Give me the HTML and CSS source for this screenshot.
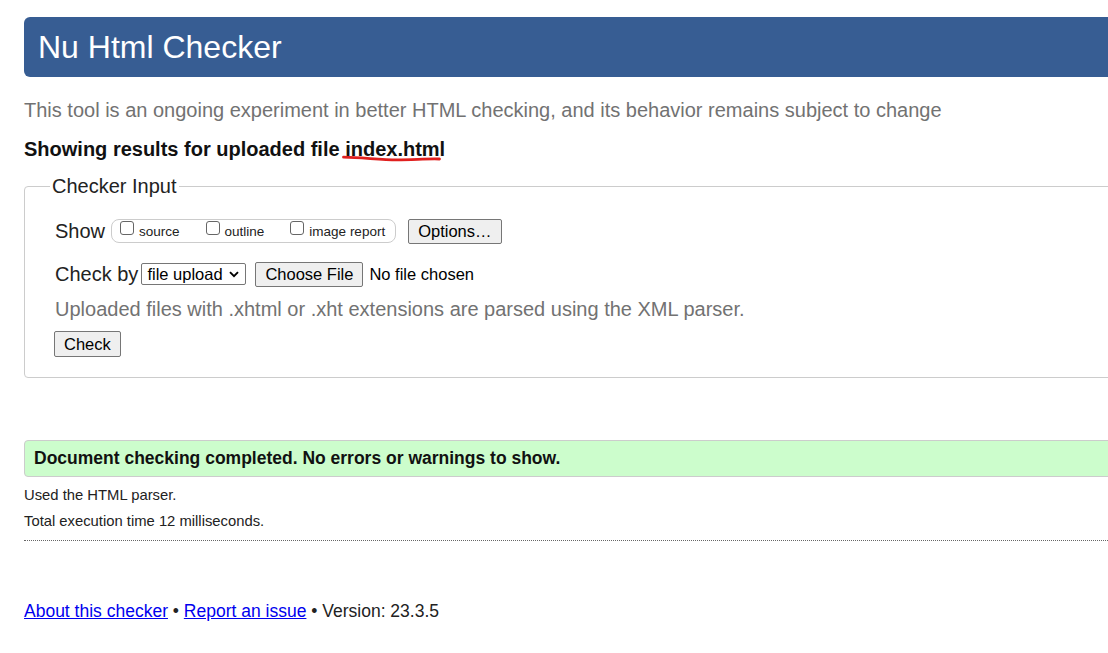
FILE: index.html
```html
<!DOCTYPE html>
<html lang="en">
<head>
<meta charset="utf-8">
<title>Nu Html Checker</title>
<link rel="stylesheet" href="styles.css">
</head>
<body>
<div class="page">
  <h1 class="title">Nu Html Checker</h1>
  <p class="intro">This tool is an ongoing experiment in better HTML checking, and its behavior remains subject to change</p>
  <p class="results">Showing results for uploaded file <span class="fname">index.html<svg class="scribble" viewBox="0 0 100 7" width="100" height="7"><path d="M1.5 2.2 C 20 2.4, 38 4.8, 55 4.8 S 84 3.6, 97.5 4" fill="none" stroke="#e0201f" stroke-width="2.8" stroke-linecap="round"/></svg></span></p>
  <fieldset class="input-box">
    <legend class="legend">Checker Input</legend>
    <div class="content">
      <div class="row">
        <span class="label">Show</span>
        <span class="pill">
          <span class="opt"><span class="cb"></span><span class="opt-text">source</span></span>
          <span class="opt"><span class="cb"></span><span class="opt-text">outline</span></span>
          <span class="opt"><span class="cb"></span><span class="opt-text">image report</span></span>
        </span>
        <button class="btn btn-options" type="button">Options…</button>
      </div>
      <div class="row row-by">
        <span class="label">Check by</span>
        <span class="select"><span class="select-text">file upload</span><svg class="chev" viewBox="0 0 10 7" width="10" height="7"><path d="M1 1.2 L5 5.2 L9 1.2" fill="none" stroke="#000" stroke-width="1.9"/></svg></span>
        <button class="btn btn-file" type="button">Choose File</button>
        <span class="nofile">No file chosen</span>
      </div>
      <p class="hint">Uploaded files with .xhtml or .xht extensions are parsed using the XML parser.</p>
      <div class="row row-submit">
        <button class="btn btn-check" type="button">Check</button>
      </div>
    </div>
  </fieldset>
  <p class="success">Document checking completed. No errors or warnings to show.</p>
  <p class="meta meta-first">Used the HTML parser.</p>
  <p class="meta">Total execution time 12 milliseconds.</p>
  <hr class="sep">
  <p class="footer"><a class="link" href="#about">About this checker</a> • <a class="link" href="#report">Report an issue</a> • Version: 23.3.5</p>
</div>
</body>
</html>
```
FILE: styles.css
```css
html {
  overflow: hidden;
}

body {
  margin: 0;
  background: #fff;
  font-family: "Liberation Sans", Arial, sans-serif;
  color: #222;
}

.page {
  width: 1160px;
  padding: 17px 0 0 24px;
}

.title {
  margin: 0;
  height: 60px;
  line-height: 60px;
  padding-left: 14px;
  background: #375d93;
  color: #fff;
  font-size: 32px;
  font-weight: normal;
  border-radius: 6px;
}

.intro {
  margin: 22px 0 0;
  font-size: 20px;
  line-height: 23px;
  color: #727272;
}

.results {
  margin: 16px 0 0;
  font-size: 20px;
  line-height: 23px;
  font-weight: bold;
  color: #111;
}

.fname {
  position: relative;
}

.scribble {
  position: absolute;
  left: -3px;
  top: 17px;
}

.input-box {
  margin: 14px 0 0;
  padding: 20px 0 20px 25px;
  border: 1px solid #ccc;
  border-radius: 4px;
  min-width: 0;
}

.legend {
  padding: 0 2px;
  font-size: 20px;
  line-height: 23px;
  color: #222;
}

.content {
  padding-left: 5px;
}

.row {
  display: flex;
  align-items: center;
  height: 26px;
}

.label {
  font-size: 20px;
  line-height: 23px;
  color: #222;
}

.pill {
  display: flex;
  align-items: flex-start;
  box-sizing: border-box;
  height: 24px;
  margin-left: 6px;
  padding: 0 10px 0 8px;
  border: 1px solid #ccc;
  border-radius: 8px;
}

.opt {
  display: flex;
  align-items: flex-start;
}

.opt + .opt {
  margin-left: 26px;
}

.cb {
  box-sizing: border-box;
  width: 14px;
  height: 14px;
  margin: 1px 5px 0 0;
  border: 1px solid #666;
  border-radius: 3px;
  background: #fff;
}

.opt-text {
  padding-top: 4px;
  font-size: 13.5px;
  line-height: 16px;
  color: #222;
}

.btn {
  box-sizing: border-box;
  height: 25px;
  padding: 0 9px;
  border: 1px solid #767676;
  border-radius: 2px;
  background: #efefef;
  font-family: inherit;
  font-size: 16.5px;
  line-height: 23px;
  color: #000;
}

.btn-options {
  margin-left: 12px;
}

.row-by {
  margin-top: 17px;
}

.select {
  display: flex;
  align-items: center;
  justify-content: space-between;
  box-sizing: border-box;
  width: 105px;
  height: 22px;
  margin-left: 3px;
  padding: 0 6px 0 5px;
  border: 1px solid #767676;
  border-radius: 2px;
  background: #fff;
}

.select-text {
  font-size: 16.5px;
  line-height: 20px;
  color: #000;
}

.chev {
  display: block;
  margin-top: 1px;
}

.btn-file {
  margin-left: 9px;
}

.nofile {
  margin-left: 6px;
  font-size: 16.5px;
  line-height: 20px;
  color: #000;
}

.hint {
  margin: 11px 0 0;
  font-size: 20px;
  line-height: 23px;
  color: #727272;
}

.row-submit {
  margin-top: 10px;
  margin-left: -1px;
}

.btn-check {
  height: 26px;
}

.success {
  margin: 62px 0 0;
  box-sizing: border-box;
  height: 37px;
  padding-left: 9px;
  line-height: 35px;
  border: 1px solid #ccc;
  border-radius: 4px;
  background: #ccfdcc;
  font-size: 17.5px;
  font-weight: bold;
  color: #111;
}

.meta {
  margin: 9px 0 0;
  font-size: 14.8px;
  line-height: 17px;
  color: #222;
}

.meta-first {
  margin-top: 10px;
}

.sep {
  height: 0;
  margin: 10px 0 0;
  border: 0;
  border-top: 1px dotted #666;
}

.footer {
  margin: 60px 0 0;
  font-size: 17.5px;
  line-height: 20px;
  color: #222;
}

.link {
  color: #0000ee;
  text-decoration: underline;
}
```
